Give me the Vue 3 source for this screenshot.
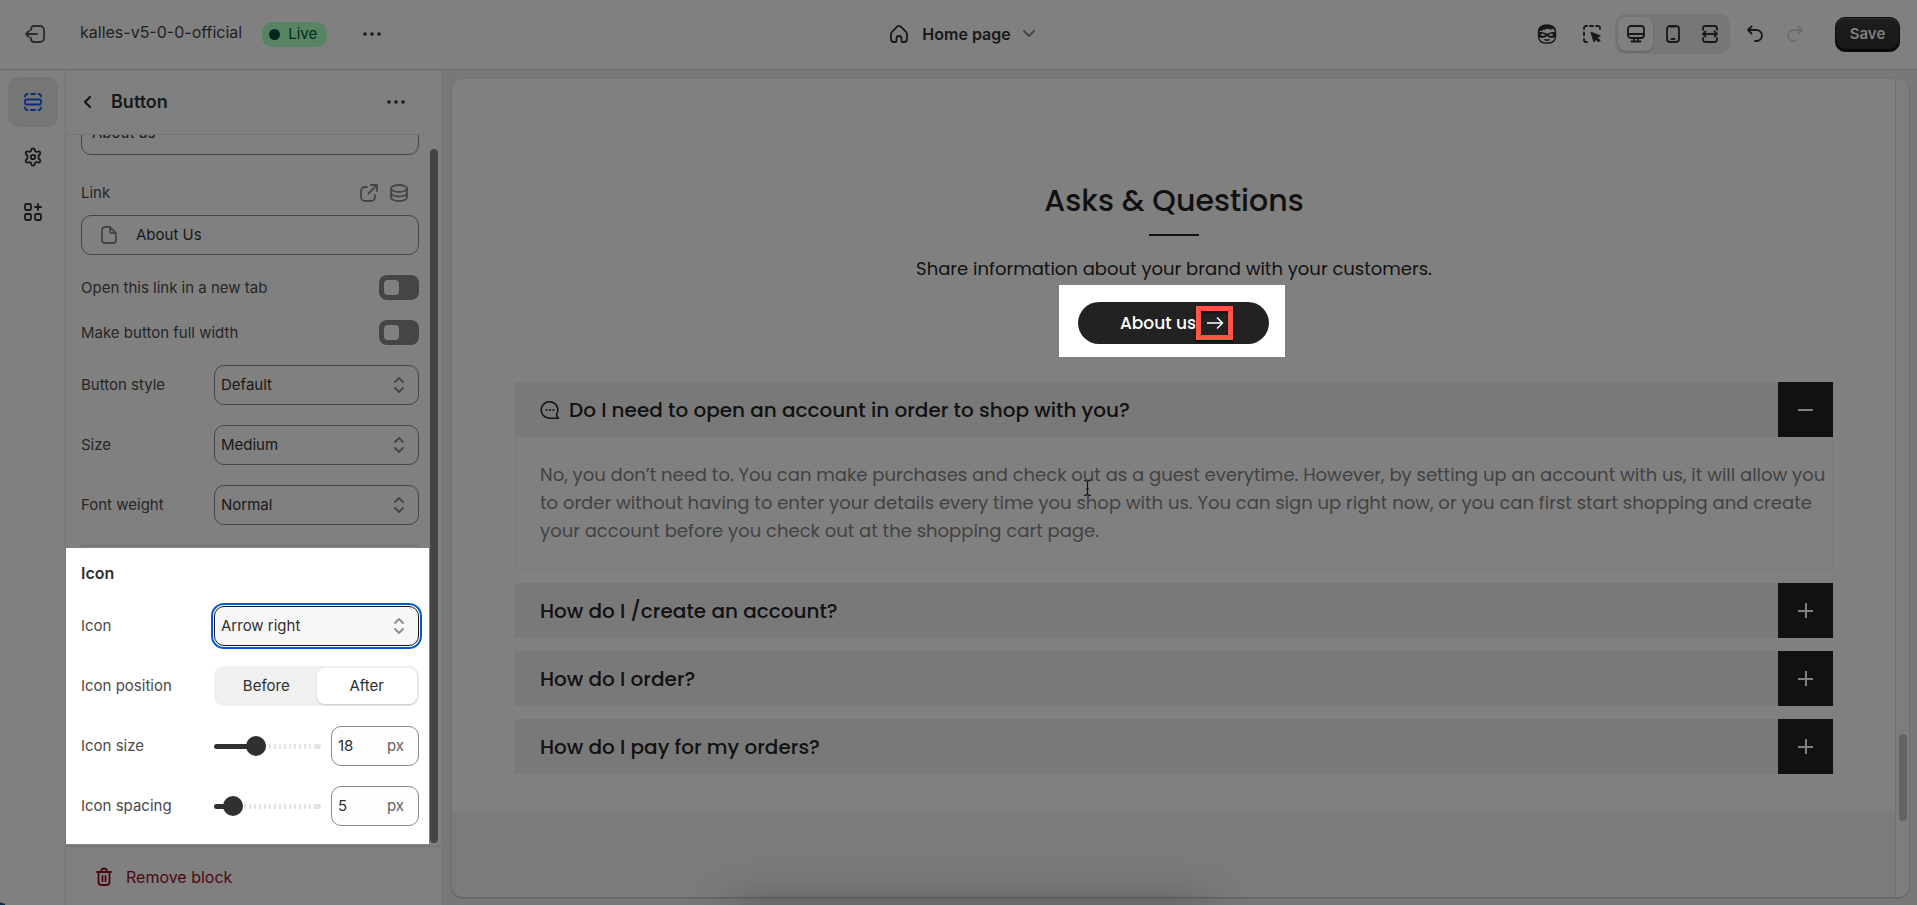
<script setup>
import { ref } from 'vue'

const text = ref('About us')
const link = ref('About Us')
const newTab = ref(false)
const fullWidth = ref(false)

// Selects of the block settings
const selects = ref([
  { id: 'style', label: 'Button style', value: 'Default', options: ['Default', 'Outline', 'Link'] },
  { id: 'size', label: 'Size', value: 'Medium', options: ['Small', 'Medium', 'Large'] },
  { id: 'weight', label: 'Font weight', value: 'Normal', options: ['Normal', 'Medium', 'Bold'] }
])

// Icon settings
const icon = ref('Arrow right')
const position = ref('After')
const ranges = ref([
  { id: 'icon-size', label: 'Icon size', value: 18, min: 10, max: 32 },
  { id: 'icon-spacing', label: 'Icon spacing', value: 5, min: 0, max: 50 }
])

// Filled part of the track, in percent
const fill = (r) => ((r.value - r.min) / (r.max - r.min)) * 100

// FAQ
const open = ref(1)
const answer = [
  'No, you don’t need to. You can make purchases and check out as a guest everytime. However, by setting up an account with us, it will allow you',
  'to order without having to enter your details every time you shop with us. You can sign up right now, or you can first start shopping and create',
  'your account before you check out at the shopping cart page.'
]
const questions = [
  { id: 1, title: 'Do I need to open an account in order to shop with you?', icon: true, answer },
  { id: 2, title: 'How do I /create an account?' },
  { id: 3, title: 'How do I order?' },
  { id: 4, title: 'How do I pay for my orders?' }
]

const toggle = (id) => {
  open.value = open.value === id ? null : id
}
</script>

<template>
  <div class="editor">
    <header class="topbar">
      <div class="top-left">
        <button class="icon-btn exit" aria-label="Exit">
          <svg width="22" height="20" viewBox="0 0 22 20" class="stroke soft">
            <path d="M7 6V5a3 3 0 0 1 3-3h6a4 4 0 0 1 4 4v8a4 4 0 0 1-4 4h-6a3 3 0 0 1-3-3v-1M13 10H2M5 7l-3 3 3 3" />
          </svg>
        </button>
        <span class="theme">kalles-v5-0-0-official</span>
        <span class="badge"><i></i>Live</span>
        <button class="icon-btn more" aria-label="More actions">
          <svg width="20" height="6" viewBox="0 0 20 6"><circle cx="3" cy="3" r="1.800" /><circle cx="10" cy="3" r="1.800" /><circle cx="17" cy="3" r="1.800" /></svg>
        </button>
      </div>

      <button class="page-btn">
        <svg width="20" height="20" viewBox="0 0 20 20" class="stroke">
          <path d="M2 10.500c0-1.200.4-2 1.200-2.900L8.200 2.700c1.100-1 2.500-1 3.600 0l5 4.900c.8.900 1.200 1.700 1.200 2.900V15c0 2-1 3-3 3h-1.500c-.6 0-1-.4-1-1v-2.500a2.500 2.500 0 0 0-5 0V17c0 .6-.4 1-1 1H5c-2 0-3-1-3-3z" />
        </svg>
        <span>Home page</span>
        <svg width="14" height="10" viewBox="0 0 14 10" class="stroke light"><path d="M2 2l5 5 5-5" /></svg>
      </button>

      <div class="top-right">
        <button class="icon-btn tool" aria-label="Assistant">
          <svg width="20" height="20" viewBox="0 0 20 20">
            <rect x="1.500" y="1.500" width="17" height="17.500" rx="6.500" fill="none" stroke="currentColor" stroke-width="1.500" />
            <path d="M1 8C.5 3 5 .5 10 .5S19.500 3 19 8c-1-.6-2-2-2.500-3.500C14.500 6 12 5.500 10.500 4.500 9 5.500 7.500 6 6 5.500L5 7.500 4 6.500C3.500 7 2.500 7.500 1 8z" />
            <path d="M1.500 8c3-.2 6 .3 8.500 1.700C12.500 8.300 15.500 7.800 18.500 8v4.500c-1.500 1.800-5.500 2.200-8.500-.5-3 2.700-7 2.300-8.500.5z" />
            <path d="M3.500 10.500q2.200-1.500 4.700.4-2.500 1.900-4.700-.4zM11.800 10.900q2.500-1.900 4.700-.4-2.200 2.300-4.700.4z" class="hole" />
            <path d="M7.500 15.300q2.500 1.800 5 0" fill="none" stroke="currentColor" stroke-width="1.500" />
          </svg>
        </button>
        <button class="icon-btn tool" aria-label="Inspector">
          <svg width="20" height="20" viewBox="0 0 20 20" class="stroke">
            <path d="M2 5V4a2 2 0 0 1 2-2h1M8 2h3M14 2h1.500A2 2 0 0 1 18 4v1M2 8.500v3M2 15v1a2 2 0 0 0 2 2h1" />
            <path d="M9 8.500l3 9.500 1.600-2.900L16.500 18l1.500-1.500-2.900-2.900L18 12z" fill="currentColor" stroke-width="1" />
          </svg>
        </button>
        <div class="devices">
          <button class="device active" aria-label="Desktop">
            <svg width="20" height="20" viewBox="0 0 20 20" class="stroke"><rect x="2" y="2" width="16" height="12" rx="3" /><path d="M2 10h16M8 14v3M12 14v3M5.500 17.500h9" /></svg>
          </button>
          <button class="device" aria-label="Mobile">
            <svg width="20" height="20" viewBox="0 0 20 20" class="stroke"><rect x="4" y="2" width="12" height="16" rx="3" /><path d="M8.500 15h3M8 2.500h4" /></svg>
          </button>
          <button class="device" aria-label="Full width">
            <svg width="20" height="20" viewBox="0 0 20 20" class="stroke"><path d="M3 6V4.500A2.500 2.500 0 0 1 5.500 2h9A2.500 2.500 0 0 1 17 4.500V6M3 14v1.500A2.500 2.500 0 0 0 5.500 18h9a2.500 2.500 0 0 0 2.500-2.500V14M3 10h14M5.500 7.500L3 10l2.500 2.500M14.500 7.500L17 10l-2.500 2.500" /></svg>
          </button>
        </div>
        <button class="icon-btn history" aria-label="Undo">
          <svg width="20" height="20" viewBox="0 0 20 20" class="stroke"><path d="M6.500 2.500L3 6l3.500 3.500M3 6h8.500a5.500 5.500 0 0 1 0 11H10" /></svg>
        </button>
        <button class="icon-btn history" aria-label="Redo" disabled>
          <svg width="20" height="20" viewBox="0 0 20 20" class="stroke"><path d="M13.500 2.500L17 6l-3.500 3.500M17 6H8.500a5.500 5.500 0 0 0 0 11H10" /></svg>
        </button>
        <button class="save">Save</button>
      </div>
    </header>

    <div class="body">
      <nav class="rail">
        <button class="rail-btn active" aria-label="Sections">
          <svg width="20" height="20" viewBox="0 0 20 20" class="stroke"><rect x="2" y="7.500" width="16" height="5" rx="1.500" /><path d="M2 4.500C2 3 3 2 4.500 2M8 2h4M15.500 2C17 2 18 3 18 4.500M2 15.500C2 17 3 18 4.500 18M8 18h4M15.500 18c1.500 0 2.500-1 2.500-2.500" /></svg>
        </button>
        <button class="rail-btn" aria-label="Theme settings">
          <svg width="20" height="20" viewBox="0 0 20 20" class="stroke"><path d="M8.300 2.700C8.500 1.700 9 1.300 10 1.300s1.500.4 1.700 1.400l.3 1.400 1.500.9 1.500-.5c1-.3 1.600 0 2.100.8s.4 1.500-.4 2.200L15.600 8.500v3l1.100 1c.8.700.9 1.400.4 2.200s-1.100 1.100-2.100.8l-1.500-.5-1.500.9-.3 1.400c-.2 1-.7 1.400-1.700 1.400s-1.500-.4-1.700-1.400L8 15.900 6.500 15l-1.500.5c-1 .3-1.600 0-2.100-.8s-.4-1.500.4-2.200l1.100-1v-3l-1.100-1c-.8-.7-.9-1.400-.4-2.200S4 4.200 5 4.500l1.500.5L8 4.100z" /><circle cx="10" cy="10" r="2.200" /></svg>
        </button>
        <button class="rail-btn" aria-label="Apps">
          <svg width="20" height="20" viewBox="0 0 20 20" class="stroke"><rect x="2" y="2" width="6" height="6" rx="1.500" /><rect x="2" y="12" width="6" height="6" rx="1.500" /><rect x="12" y="12" width="6" height="6" rx="1.500" /><path d="M15 2v6M12 5h6" /></svg>
        </button>
      </nav>

      <aside class="panel">
        <div class="panel-head">
          <button class="icon-btn" aria-label="Back">
            <svg width="14" height="16" viewBox="0 0 14 16" class="stroke bold"><path d="M9 3L4 8l5 5" /></svg>
          </button>
          <h2>Button</h2>
          <button class="icon-btn" aria-label="Block actions">
            <svg width="20" height="6" viewBox="0 0 20 6"><circle cx="3" cy="3" r="1.800" /><circle cx="10" cy="3" r="1.800" /><circle cx="17" cy="3" r="1.800" /></svg>
          </button>
        </div>

        <div class="panel-scroll">
          <div class="settings">
            <input v-model="text" class="field label-field" aria-label="Button label" />

            <div class="row link-row">
              <label for="link">Link</label>
              <span class="link-icons">
                <svg width="20" height="20" viewBox="0 0 20 20" class="stroke"><path d="M8 4H6a4 4 0 0 0-4 4v6a4 4 0 0 0 4 4h6a4 4 0 0 0 4-4v-2M12 2h6v6M17.500 2.500L9.500 10.500" /></svg>
                <svg width="20" height="20" viewBox="0 0 20 20" class="stroke"><ellipse cx="10" cy="5.500" rx="8" ry="3.500" /><path d="M2 5.500v9C2 16.500 5.500 18 10 18s8-1.500 8-3.500v-9M2 10c0 2 3.500 3.500 8 3.500s8-1.500 8-3.500" /></svg>
              </span>
            </div>
            <div class="field link-field">
              <svg width="18" height="20" viewBox="0 0 18 20" class="stroke"><path d="M10 2H5a3 3 0 0 0-3 3v10a3 3 0 0 0 3 3h8a3 3 0 0 0 3-3V8zM10 2v4a2 2 0 0 0 2 2h4" /></svg>
              <input id="link" v-model="link" />
            </div>

            <div class="row toggle-row">
              <label for="new-tab">Open this link in a new tab</label>
              <input id="new-tab" v-model="newTab" type="checkbox" class="switch" />
            </div>
            <div class="row toggle-row">
              <label for="full-width">Make button full width</label>
              <input id="full-width" v-model="fullWidth" type="checkbox" class="switch" />
            </div>

            <div v-for="s in selects" :key="s.id" class="row">
              <label :for="s.id">{{ s.label }}</label>
              <span class="select-wrap">
                <select :id="s.id" v-model="s.value" class="field">
                  <option v-for="o in s.options" :key="o">{{ o }}</option>
                </select>
                <svg width="12" height="18" viewBox="0 0 12 18" class="stroke"><path d="M2 6l4-4 4 4M2 12l4 4 4-4" /></svg>
              </span>
            </div>
            <hr />
          </div>

          <!-- Highlighted group -->
          <section class="spotlight">
            <h3>Icon</h3>
            <div class="row">
              <label for="icon">Icon</label>
              <span class="select-wrap">
                <select id="icon" v-model="icon" class="field focused">
                  <option>None</option>
                  <option>Arrow right</option>
                </select>
                <svg width="12" height="18" viewBox="0 0 12 18" class="stroke"><path d="M2 6l4-4 4 4M2 12l4 4 4-4" /></svg>
              </span>
            </div>
            <div class="row">
              <span>Icon position</span>
              <div class="segmented">
                <button
                  v-for="p in ['Before', 'After']"
                  :key="p"
                  :class="{ active: position === p }"
                  @click="position = p"
                >{{ p }}</button>
              </div>
            </div>
            <div v-for="r in ranges" :key="r.id" class="row">
              <label :for="r.id">{{ r.label }}</label>
              <div class="range">
                <input
                  :id="r.id"
                  v-model.number="r.value"
                  type="range"
                  :min="r.min"
                  :max="r.max"
                  :style="{ '--fill': fill(r) + '%' }"
                />
                <span class="field unit">
                  <input v-model.number="r.value" :aria-label="r.label + ' in pixels'" />
                  <span>px</span>
                </span>
              </div>
            </div>
          </section>
          <div class="thumb"></div>
        </div>

        <div class="panel-foot">
          <button class="remove">
            <svg width="18" height="20" viewBox="0 0 18 20" class="stroke"><path d="M2 5h14M6 5V4.500a3 3 0 0 1 6 0V5M3.500 5v10a3 3 0 0 0 3 3h5a3 3 0 0 0 3-3V5M7.500 9v5M10.500 9v5" /></svg>
            Remove block
          </button>
        </div>
      </aside>

      <main class="stage">
        <div class="frame">
          <div class="page">
            <section class="faq">
              <h1>Asks &amp; Questions</h1>
              <div class="line"></div>
              <p class="sub">Share information about your brand with your customers.</p>
              <div class="cta-box">
                <a href="#" class="cta" @click.prevent>
                  About us
                  <span class="mark">
                    <svg width="18" height="14" viewBox="0 0 18 14"><path d="M1 7h15M11 1.500L16.500 7 11 12.500" /></svg>
                  </span>
                </a>
              </div>

              <div class="accordion">
                <div v-for="q in questions" :key="q.id" class="item">
                  <button class="question" :aria-expanded="open === q.id" @click="toggle(q.id)">
                    <span class="title">
                      <svg v-if="q.icon" width="20" height="20" viewBox="0 0 20 20"><path d="M16.500 14.500A8.300 8.300 0 1 0 10 18.300h8.500c-1-.8-1.600-2-2-3.800z" /><circle cx="6.500" cy="10" r="1" /><circle cx="10" cy="10" r="1" /><circle cx="13.500" cy="10" r="1" /></svg>
                      {{ q.title }}
                    </span>
                    <span class="sign" :class="{ minus: open === q.id }"></span>
                  </button>
                  <div v-if="q.answer && open === q.id" class="answer">
                    <span v-for="l in q.answer" :key="l">{{ l }}</span>
                    <svg class="caret" width="9" height="18" viewBox="0 0 9 18"><path d="M1 1.500q3.500 0 3.500 2v11q0 2-3.500 2M8 1.500q-3.500 0-3.500 2v11q0 2 3.500 2M3 10h3" /></svg>
                  </div>
                </div>
              </div>
            </section>
          </div>
          <div class="scroll"><div></div></div>
        </div>
        <div class="glow"></div>
      </main>
    </div>
    <div class="corner"></div>
  </div>
</template>

<style>
body {
  margin: 0;
  background: #808080;
}
</style>

<style scoped>
* {
  box-sizing: border-box;
}

.editor {
  position: relative;
  height: 100vh;
  display: flex;
  flex-direction: column;
  overflow: hidden;
  background: #808080;
  color: #181818;
  font-family: Inter, "Liberation Sans", sans-serif;
  font-size: 16px;
  line-height: 20px;
}

button,
input,
select {
  margin: 0;
  padding: 0;
  border: 0;
  background: none;
  color: inherit;
  font: inherit;
}

button {
  cursor: pointer;
}

svg {
  display: block;
  flex: none;
  fill: currentColor;
}

.stroke {
  fill: none;
  stroke: currentColor;
  stroke-width: 1.8;
  stroke-linecap: round;
  stroke-linejoin: round;
}

.stroke.bold {
  stroke-width: 2.2;
}

.soft {
  color: #2c2c2c;
}

.light {
  color: #454545;
}

.hole {
  fill: #808080;
}

.icon-btn {
  display: flex;
  align-items: center;
  justify-content: center;
}

/* Top bar */
.topbar {
  position: relative;
  z-index: 1;
  flex: none;
  height: 69px;
  display: grid;
  grid-template-columns: 1fr auto 1fr;
  align-items: center;
  padding-bottom: 1px;
  box-shadow: 0 1px 1px #6c6c6c;
}

.top-left {
  display: flex;
  align-items: center;
  padding-left: 24px;
}

.theme {
  margin: 0 20px 4px 34px;
  color: #202020;
}

.badge {
  display: flex;
  align-items: center;
  height: 25px;
  padding: 0 10px 0 7px;
  border-radius: 10px;
  background: #578463;
  color: #062a1d;
  font-size: 15px;
}

.badge i {
  width: 11px;
  height: 11px;
  margin-right: 8px;
  border-radius: 50%;
  background: #02261a;
}

.more {
  margin-left: 35px;
}

.page-btn {
  display: flex;
  align-items: center;
  gap: 13px;
  padding-left: 8px;
  font-weight: 600;
}

.page-btn svg:last-child {
  margin-left: -2px;
}

.top-right {
  display: flex;
  align-items: center;
  justify-content: flex-end;
  padding-right: 17px;
}

.tool {
  width: 45px;
  height: 35px;
}

.devices {
  display: flex;
  gap: 2px;
  margin: 0 5px 0 1px;
  padding: 3px;
  border-radius: 10px;
  background: #777;
}

.device {
  width: 35px;
  height: 34px;
  display: flex;
  align-items: center;
  justify-content: center;
  border-radius: 8px;
}

.device.active {
  background: #808080;
  box-shadow: 0 1px 2px #606060;
}

.history {
  width: 40px;
  height: 35px;
}

.history:disabled {
  color: #6c6c6c;
}

.save {
  width: 65px;
  height: 35px;
  margin-left: 20px;
  border: 1px solid #0c0c0c;
  border-radius: 10px;
  background: linear-gradient(#1e1e1e, #171717);
  box-shadow: inset 0 1px 0 #2f2f2f, inset 0 -2px 0 #060606;
  color: #808080;
  font-size: 15px;
  font-weight: 600;
}

.body {
  flex: 1;
  min-height: 0;
  display: flex;
}

/* Rail */
.rail {
  flex: none;
  width: 66px;
  display: flex;
  flex-direction: column;
  gap: 5px;
  padding: 8px;
  border-right: 1px solid #747474;
}

.rail-btn {
  width: 50px;
  height: 50px;
  display: flex;
  align-items: center;
  justify-content: center;
  border-radius: 10px;
}

.rail-btn.active {
  background: #767676;
  color: #0a2f78;
}

/* Settings panel */
.panel {
  flex: none;
  width: 375px;
  display: flex;
  flex-direction: column;
}

.panel-head {
  flex: none;
  height: 66px;
  display: flex;
  align-items: center;
  margin-right: 15px;
  padding: 0 20px 0 15px;
  border-bottom: 1px solid #747474;
}

.panel-head h2 {
  flex: 1;
  margin: 0 0 0 16px;
  font-size: 18px;
  font-weight: 600;
}

.panel-scroll {
  position: relative;
  flex: 1;
  min-height: 0;
  display: flex;
  flex-direction: column;
  justify-content: flex-end;
  overflow: hidden;
  padding: 0 12px 2px 0;
  font-size: 15px;
}

.settings,
.spotlight {
  flex: none;
  display: flex;
  flex-direction: column;
  gap: 20px;
  padding: 0 10px 0 15px;
}

.row {
  display: flex;
  align-items: center;
  justify-content: space-between;
  color: #262626;
}

.field {
  width: 100%;
  height: 40px;
  padding: 0 6px;
  border: 1px solid #454545;
  border-radius: 10px;
  color: #181818;
}

.label-field {
  padding: 0 10px 6px;
}

.link-row {
  height: 20px;
  margin-top: 8px;
  margin-bottom: -8px;
}

.link-icons {
  display: flex;
  gap: 10px;
  padding-right: 10px;
  color: #454545;
}

.link-field {
  display: flex;
  align-items: center;
  gap: 18px;
  padding-left: 18px;
}

.link-field svg {
  color: #454545;
}

.link-field input {
  flex: 1;
  min-width: 0;
}

.toggle-row {
  height: 25px;
}

.switch {
  appearance: none;
  width: 40px;
  height: 25px;
  padding: 5px;
  border-radius: 8px;
  background: #454545;
}

.switch::before {
  content: '';
  display: block;
  width: 15px;
  height: 15px;
  border-radius: 4px;
  background: #808080;
}

.switch:checked::before {
  margin-left: auto;
}

.select-wrap {
  position: relative;
  width: 205px;
}

.select-wrap select {
  display: block;
  appearance: none;
}

.select-wrap svg {
  position: absolute;
  top: 11px;
  right: 14px;
  color: #454545;
  pointer-events: none;
}

hr {
  width: 100%;
  height: 1px;
  margin: 0 0 2px;
  border: 0;
  background: #707070;
}

.spotlight {
  position: relative;
  width: 363px;
  padding-top: 15px;
  padding-bottom: 18px;
  background: #fff;
}

.spotlight h3 {
  margin: 0 0 3px;
  color: #303030;
  font-size: 16px;
  font-weight: 600;
}

.spotlight .row {
  color: #4a4a4a;
}

.spotlight .field {
  border-color: #8a8a8a;
  background: #fdfdfd;
  color: #303030;
}

.spotlight .focused {
  border-color: #1a1a1a;
  background: #f7f7f7;
  outline: 2px solid #005bd3;
  outline-offset: 1px;
}

.spotlight .select-wrap svg {
  color: #8a8a8a;
}

.segmented {
  width: 205px;
  height: 40px;
  display: grid;
  grid-template-columns: 1fr 1fr;
  padding: 2px;
  border-radius: 10px;
  background: #f0f0f0;
}

.segmented button {
  border-radius: 8px;
  color: #303030;
}

.segmented .active {
  background: #fff;
  box-shadow: 0 1px 2px #c8c8c8;
}

.range {
  width: 205px;
  display: flex;
  align-items: center;
  gap: 10px;
}

.range > input {
  appearance: none;
  flex: 1;
  min-width: 0;
  height: 20px;
}

.range > input::-webkit-slider-runnable-track {
  height: 5px;
  border-radius: 3px;
  background:
    linear-gradient(#303030, #303030) 0 0 / var(--fill) 100% no-repeat,
    linear-gradient(#e3e3e3, #e3e3e3) 100% 0 / 7px 100% no-repeat,
    repeating-linear-gradient(90deg, #e3e3e3 0 2px, #fff 2px 5px);
}

.range > input::-webkit-slider-thumb {
  appearance: none;
  width: 20px;
  height: 20px;
  margin-top: -8px;
  border-radius: 50%;
  background: #303030;
}

.unit {
  flex: none;
  width: 88px;
  display: flex;
  align-items: center;
}

.unit input {
  flex: 1;
  min-width: 0;
}

.unit span {
  margin-right: 8px;
  color: #616161;
}

.thumb {
  position: absolute;
  top: 14px;
  right: 3px;
  bottom: 3px;
  width: 8px;
  border-radius: 4px;
  background: #454545;
}

.panel-foot {
  flex: none;
  height: 59px;
  display: flex;
  align-items: center;
  padding: 2px 0 0 29px;
  border-top: 1px solid #6f6f6f;
}

.remove {
  display: flex;
  align-items: center;
  gap: 13px;
  color: #4a0911;
}

/* Preview */
.stage {
  position: relative;
  flex: 1;
  min-width: 0;
  padding: 10px 8px 8px 11px;
  background: #787878;
}

.frame {
  height: 100%;
  display: flex;
  overflow: hidden;
  border-radius: 10px;
  background: #7b7b7b;
  box-shadow: 0 1px 2px #5a5a5a;
}

.page {
  flex: 1;
  min-width: 0;
}

.scroll {
  position: relative;
  width: 14px;
  border-left: 1px solid #727272;
  background: #7d7d7d;
}

.scroll div {
  position: absolute;
  right: 2px;
  bottom: 76px;
  width: 8px;
  height: 87px;
  border-radius: 4px;
  background: #636363;
}

.faq {
  display: flex;
  flex-direction: column;
  align-items: center;
  padding: 100px 62px 37px 63px;
  background: #808080;
  color: #111;
  font-family: Poppins, Inter, sans-serif;
}

.faq h1 {
  margin: 0;
  font-size: 30px;
  line-height: 44px;
  font-weight: 500;
}

.line {
  width: 50px;
  height: 2px;
  margin-top: 11px;
  background: #111;
}

.sub {
  margin: 18px 0 0;
  font-size: 18px;
  line-height: 30px;
}

.cta-box {
  margin: 1px 4px 25px 0;
  padding: 17px 16px 13px 19px;
  background: #fff;
}

.cta {
  width: 191px;
  height: 42px;
  display: flex;
  align-items: center;
  padding-left: 42px;
  border-radius: 21px;
  background: #222;
  color: #fff;
  font-size: 17px;
  font-weight: 500;
  text-decoration: none;
  white-space: nowrap;
}

.mark {
  width: 37px;
  height: 34px;
  display: flex;
  align-items: center;
  justify-content: center;
  border: 5px solid #ff5546;
  box-shadow: 0 2px 2px #111, inset 0 2px 2px #111;
}

.mark svg {
  fill: none;
  stroke: #fff;
  stroke-width: 1.5;
}

.accordion {
  width: 100%;
  display: flex;
  flex-direction: column;
  gap: 13px;
}

.question {
  width: 100%;
  height: 55px;
  display: flex;
  align-items: center;
  justify-content: space-between;
  padding-left: 25px;
  background: #797979;
  text-align: left;
  font-size: 20px;
  font-weight: 500;
}

.title {
  display: flex;
  align-items: center;
  gap: 9px;
}

.title path {
  fill: none;
  stroke: currentColor;
  stroke-width: 1.5;
  stroke-linejoin: round;
}

.sign {
  width: 55px;
  height: 55px;
  display: grid;
  place-items: center;
  background: #111;
}

.sign::before,
.sign::after {
  content: '';
  grid-area: 1 / 1;
  width: 15px;
  height: 2px;
  background: #808080;
}

.sign::after {
  width: 2px;
  height: 15px;
}

.sign.minus::after {
  display: none;
}

.answer {
  position: relative;
  padding: 24px 24px;
  border: 1px solid #7a7a7a;
  border-top: 0;
  color: #424242;
  font-size: 18px;
  line-height: 28px;
  white-space: nowrap;
}

.answer span {
  display: block;
}

.caret {
  position: absolute;
  left: 567px;
  top: 42px;
  fill: none;
  stroke: #161616;
  stroke-width: 1.2;
}

/* Shade at the bottom edge of the window */
.glow {
  position: absolute;
  left: 290px;
  right: 710px;
  bottom: -20px;
  height: 20px;
  border-radius: 20px;
  box-shadow: 0 0 40px 4px rgba(0, 0, 0, 0.25);
}

.corner {
  position: absolute;
  left: 0;
  bottom: 0;
  width: 5px;
  height: 10px;
  background: radial-gradient(circle at 100% 0, transparent 8px, #12293f 9px);
}
</style>
